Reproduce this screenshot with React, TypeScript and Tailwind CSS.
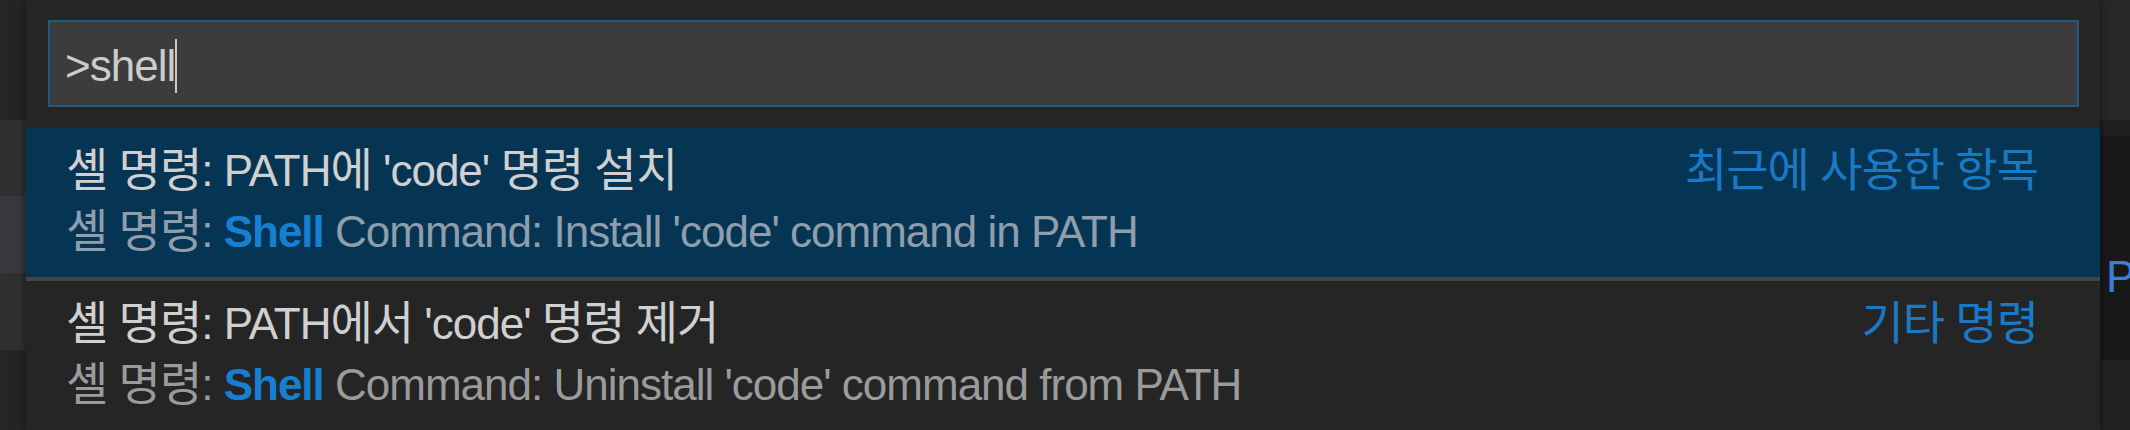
import React from "react";

const FONT = { fontFamily: '"Liberation Sans", "Noto Sans CJK KR", sans-serif' };

function K({ text }: { text: string }) {
  const parts = text.split(/([\uAC00-\uD7A3]+)/);
  return (
    <>
      {parts.map((p, i) =>
        /[\uAC00-\uD7A3]/.test(p) ? (
          <span key={i} className="text-[46px]">
            {p}
          </span>
        ) : (
          <React.Fragment key={i}>{p}</React.Fragment>
        )
      )}
    </>
  );
}

function Row({
  title,
  prefix,
  rest,
  label,
  selected,
}: {
  title: string;
  prefix: string;
  rest: string;
  label: string;
  selected?: boolean;
}) {
  return (
    <div
      className={`h-[152px] flex justify-between pl-[40px] pr-[62px] pt-[12px] text-[44px] tracking-[-1px] leading-[61px] ${
        selected ? "bg-[#063554]" : "bg-[#252526]"
      }`}
    >
      <div className="flex flex-col">
        <div className="h-[61px] whitespace-nowrap text-[#d0d0d0]">
          <K text={title} />
        </div>
        <div
          className={`h-[61px] whitespace-nowrap ${
            selected ? "text-[#8e9eac]" : "text-[#9b9b9b]"
          }`}
        >
          <K text={prefix} />
          <span className="font-bold text-[#1580d2]">Shell</span>
          {rest}
        </div>
      </div>
      <div className="h-[61px] whitespace-nowrap text-[#1a79c4]">
        <K text={label} />
      </div>
    </div>
  );
}

export default function App() {
  return (
    <div className="w-[2130px] h-[430px] flex bg-[#1e1e1e] overflow-hidden" style={FONT}>
      <div className="w-[26px] flex flex-col shrink-0">
        <div className="h-[120px] bg-[#252525]" />
        <div className="h-[76px] bg-[#303030]" />
        <div className="h-[77px] bg-[#37373d]" />
        <div className="h-[77px] bg-[#303030]" />
        <div className="flex-1 bg-[#252525]" />
      </div>
      <div className="relative z-10 w-[2074px] shrink-0 flex flex-col bg-[#252526] shadow-[0_0_8px_rgba(0,0,0,0.55)]">
        <div className="pt-[20px] pb-[21px] pl-[22px] pr-[21px]">
          <div className="h-[87px] border-2 border-[#1d5a86] bg-[#3c3c3c] flex items-center pl-[15px]">
            <span className="text-[44px] tracking-[-1px] text-[#cccccc] leading-[54px] mt-[4px]">&gt;shell</span>
            <span className="w-[2px] h-[54px] bg-[#c8c8c8] mt-[4px]" />
          </div>
        </div>
        <Row
          selected
          title="셸 명령: PATH에 'code' 명령 설치"
          prefix="셸 명령: "
          rest=" Command: Install 'code' command in PATH"
          label="최근에 사용한 항목"
        />
        <div className="h-[4px] bg-[#454549]" />
        <Row
          title="셸 명령: PATH에서 'code' 명령 제거"
          prefix="셸 명령: "
          rest=" Command: Uninstall 'code' command from PATH"
          label="기타 명령"
        />
      </div>
      <div className="w-[30px] shrink-0 flex flex-col">
        <div className="h-[120px] bg-[#282828]" />
        <div className="h-[16px] bg-[#1f1f1f]" />
        <div className="h-[224px] bg-[#181818] pl-[6px] pt-[121px] text-[44px] leading-[40px] text-[#3b7dd8]">P</div>
        <div className="flex-1 bg-[#222222]" />
      </div>
    </div>
  );
}
